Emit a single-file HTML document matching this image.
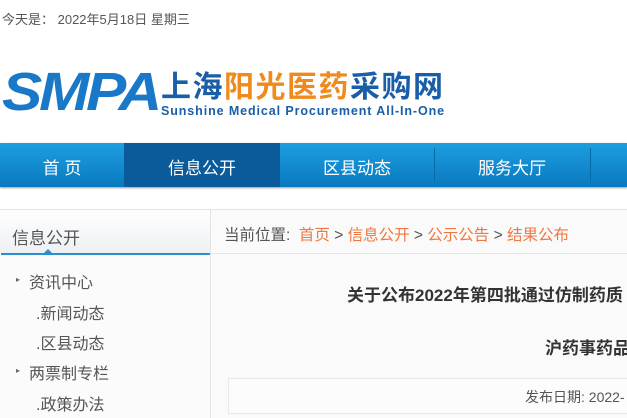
<!DOCTYPE html>
<html><head><meta charset="utf-8"><style>
*{margin:0;padding:0;box-sizing:border-box}
body{width:627px;height:418px;overflow:hidden;background:#fff;font-family:"Liberation Sans","Noto Sans CJK SC",sans-serif;position:relative}
.a{position:absolute;white-space:nowrap}
</style></head><body>
<div class="a" style="left:2px;top:9px;font-size:13px;color:#555">今天是： 2022年5月18日 星期三</div>
<div class="a" style="left:2px;top:62px;font-size:54px;font-weight:bold;font-style:italic;color:#1a78c8;letter-spacing:-3px;line-height:60px;font-family:'Liberation Sans',sans-serif;transform-origin:0 0;transform:scaleX(1.12)">SMPA</div>
<div class="a" style="left:161px;top:70px;font-size:30px;font-weight:bold;line-height:36px;letter-spacing:1.5px"><span style="color:#1a5ea8">上海</span><span style="color:#f08a1c">阳光医药</span><span style="color:#1a5ea8">采购网</span></div>
<div class="a" style="left:161px;top:104px;font-size:12.5px;font-weight:bold;color:#1a5ea8;letter-spacing:0.9px">Sunshine Medical Procurement All-In-One</div>
<div class="a" style="left:0;top:143px;width:627px;height:44px;background:linear-gradient(#1d9ee0,#0a79bf);box-shadow:0 1px 2px #999"></div>
<div class="a" style="left:124px;top:143px;width:156px;height:44px;background:#0b5a9a"></div>
<div class="a" style="left:434px;top:148px;width:1px;height:34px;background:#0a6aa8"></div>
<div class="a" style="left:590px;top:148px;width:1px;height:34px;background:#0a6aa8"></div>
<div class="a" style="left:0;top:154px;width:124px;text-align:center;color:#fff;font-size:17px">首 页</div>
<div class="a" style="left:124px;top:154px;width:156px;text-align:center;color:#fff;font-size:17px">信息公开</div>
<div class="a" style="left:280px;top:154px;width:154px;text-align:center;color:#fff;font-size:17px">区县动态</div>
<div class="a" style="left:434px;top:154px;width:156px;text-align:center;color:#fff;font-size:17px">服务大厅</div>
<div class="a" style="left:0;top:209px;width:627px;height:1px;background:#e3e3e3"></div>
<div class="a" style="left:0;top:210px;width:210px;height:208px;background:#fbfbfb"></div>
<div class="a" style="left:0;top:210px;width:210px;height:43px;background:linear-gradient(#fff,#eef0f3)"></div>
<div class="a" style="left:1px;top:253px;width:209px;height:2px;background:#2a8fd0"></div>
<div class="a" style="left:43px;top:249px;width:0;height:0;border-left:5px solid transparent;border-right:5px solid transparent;border-bottom:5px solid #2a8fd0"></div>
<div class="a" style="left:210px;top:210px;width:1px;height:208px;background:#e3e3e3"></div>
<div class="a" style="left:211px;top:210px;width:416px;height:208px;background:#fafafa"></div>
<div class="a" style="left:211px;top:253px;width:416px;height:1px;background:#e6e6e6"></div>
<div class="a" style="left:12px;top:224px;font-size:17px;color:#555">信息公开</div>
<div class="a" style="left:224px;top:223px;font-size:15.5px;color:#555">当前位置: &nbsp;<span style="color:#f07840">首页</span> &gt; <span style="color:#f07840">信息公开</span> &gt; <span style="color:#f07840">公示公告</span> &gt; <span style="color:#f07840">结果公布</span></div>
<div class="a" style="left:16px;top:275px;font-size:8px;color:#666">▸</div>
<div class="a" style="left:29px;top:269px;font-size:16px;color:#555">资讯中心</div>
<div class="a" style="left:36px;top:300px;font-size:16px;color:#555">.新闻动态</div>
<div class="a" style="left:36px;top:330px;font-size:16px;color:#555">.区县动态</div>
<div class="a" style="left:16px;top:366px;font-size:8px;color:#666">▸</div>
<div class="a" style="left:29px;top:360px;font-size:16px;color:#555">两票制专栏</div>
<div class="a" style="left:36px;top:391px;font-size:16px;color:#555">.政策办法</div>
<div class="a" style="left:347px;top:281px;font-size:17px;font-weight:bold;color:#333">关于公布2022年第四批通过仿制药质</div>
<div class="a" style="left:545px;top:334px;font-size:17px;font-weight:bold;color:#333">沪药事药品</div>
<div class="a" style="left:228px;top:378px;width:410px;height:36px;border:1px solid #e8e8e8;background:#fcfcfc"></div>
<div class="a" style="left:525px;top:387px;font-size:14px;color:#555">发布日期: 2022-</div>
</body></html>
